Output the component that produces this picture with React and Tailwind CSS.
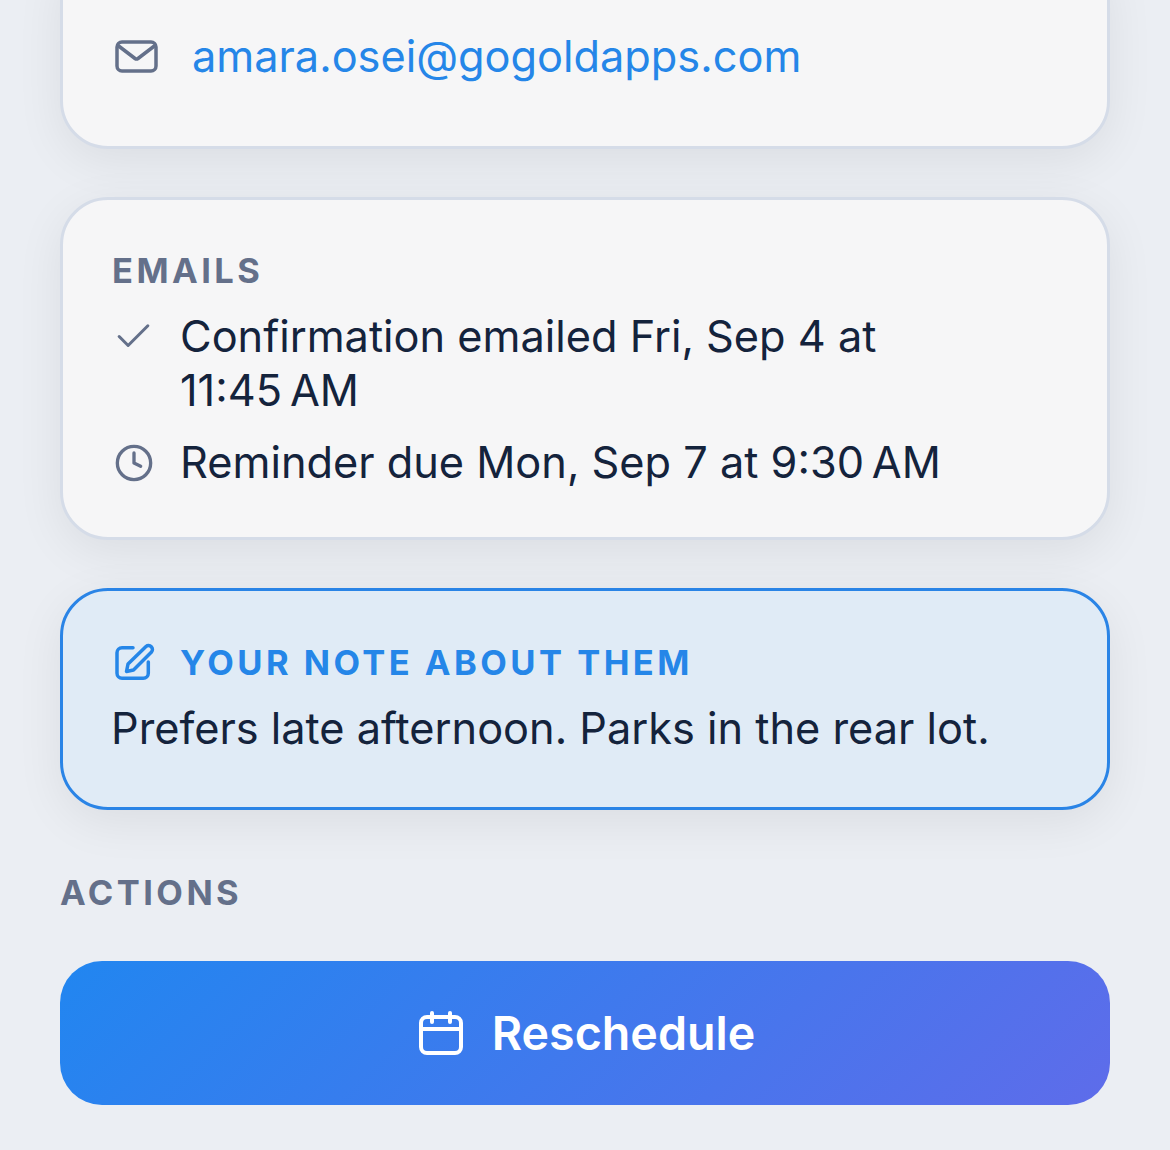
import { Check, Clock } from 'lucide-react';

function MailIcon() {
  return (
    <svg width="48" height="36" viewBox="0 0 48 36" fill="none" stroke="currentColor" strokeWidth="3.5" strokeLinecap="round" strokeLinejoin="round" className="shrink-0 text-[#64708a]">
      <rect x="4" y="4" width="39" height="29" rx="5" />
      <path d="M5 7.5 22 20.5a2.5 2.5 0 0 0 3 0L42 7.5" />
    </svg>
  );
}

function NoteIcon() {
  return (
    <svg width="44" height="42" viewBox="0 0 44 42" fill="none" stroke="currentColor" strokeWidth="3.5" strokeLinecap="round" strokeLinejoin="round" className="ml-px shrink-0 text-[#2586e8]">
      <path d="M20 5.7H9a5 5 0 0 0-5 5V31.3a5 5 0 0 0 5 5H30.3a5 5 0 0 0 5-5V20" />
      <path d="M13.5 29.5 15 22 33 4.5a3.9 3.9 0 0 1 5.5 5.5L20.5 28Z" />
    </svg>
  );
}

function CalendarIcon() {
  return (
    <svg width="48" height="48" viewBox="0 0 48 48" fill="none" stroke="currentColor" strokeWidth="4" strokeLinecap="round" strokeLinejoin="round" className="shrink-0">
      <rect x="4" y="8" width="40" height="36" rx="6" />
      <path d="M4 20H44" />
      <path d="M15 4V13" />
      <path d="M33 4V13" />
    </svg>
  );
}

export default function App() {
  return (
    <div className="h-[1150px] overflow-hidden bg-[#ebeef3] px-[60px] font-['Inter',sans-serif] text-[#14233c]">
      <div className="-mt-[52px] h-[201px] rounded-[48px] border-[3px] border-[#d5dce8] bg-[#f6f6f7] pl-[50px] pt-[81px] shadow-[0_12px_48px_rgba(0,0,0,0.07)]">
        <div className="flex items-center">
          <MailIcon />
          <a className="ml-[31px] text-[43.3px] leading-[48px] text-[#2586e8]">amara.osei@gogoldapps.com</a>
        </div>
      </div>

      <div className="mt-[48px] h-[343px] rounded-[48px] border-[3px] border-[#d5dce8] bg-[#f6f6f7] px-[49px] pt-[51px] shadow-[0_12px_48px_rgba(0,0,0,0.07)]">
        <div className="text-[34.5px] font-bold leading-[40px] tracking-[3.45px] text-[#64708a]">EMAILS</div>
        <div className="mt-[18px] flex">
          <Check className="mt-[6px] h-[43px] w-[43px] shrink-0 text-[#64708a]" strokeWidth={1.7} />
          <div className="ml-[25px] w-[760px] text-[43.3px] leading-[54px]">Confirmation emailed Fri, Sep 4 at 11:45{'\u202f'}AM</div>
        </div>
        <div className="mt-[18px] flex">
          <Clock className="mx-[2px] mt-[8px] h-[40px] w-[40px] shrink-0 text-[#64708a]" strokeWidth={2} />
          <div className="ml-[24px] text-[43.3px] leading-[54px]">Reminder due Mon, Sep 7 at 9:30{'\u202f'}AM</div>
        </div>
      </div>

      <div className="mt-[48px] h-[222px] rounded-[48px] border-[3px] border-[#2a84e6] bg-[#e0ebf6] px-[49px] pt-[51px] shadow-[0_12px_48px_rgba(0,0,0,0.07)]">
        <div className="flex items-center">
          <NoteIcon />
          <div className="ml-[23px] text-[34.5px] font-bold leading-[40px] tracking-[3.45px] text-[#2586e8]">YOUR NOTE ABOUT THEM</div>
        </div>
        <div className="-ml-px mt-[17px] text-[43.3px] leading-[54px]">Prefers late afternoon. Parks in the rear lot.</div>
      </div>

      <div className="mt-[63px] text-[34.5px] font-bold leading-[40px] tracking-[3.45px] text-[#64708a]">ACTIONS</div>

      <button className="mt-[48px] flex h-[144px] w-full items-center justify-center rounded-[42px] bg-[linear-gradient(135deg,#2186f0,#5e6cea)] pl-[2px] text-white">
        <CalendarIcon />
        <span className="ml-[27px] text-[46.6px] font-semibold leading-[54px]">Reschedule</span>
      </button>
    </div>
  );
}
